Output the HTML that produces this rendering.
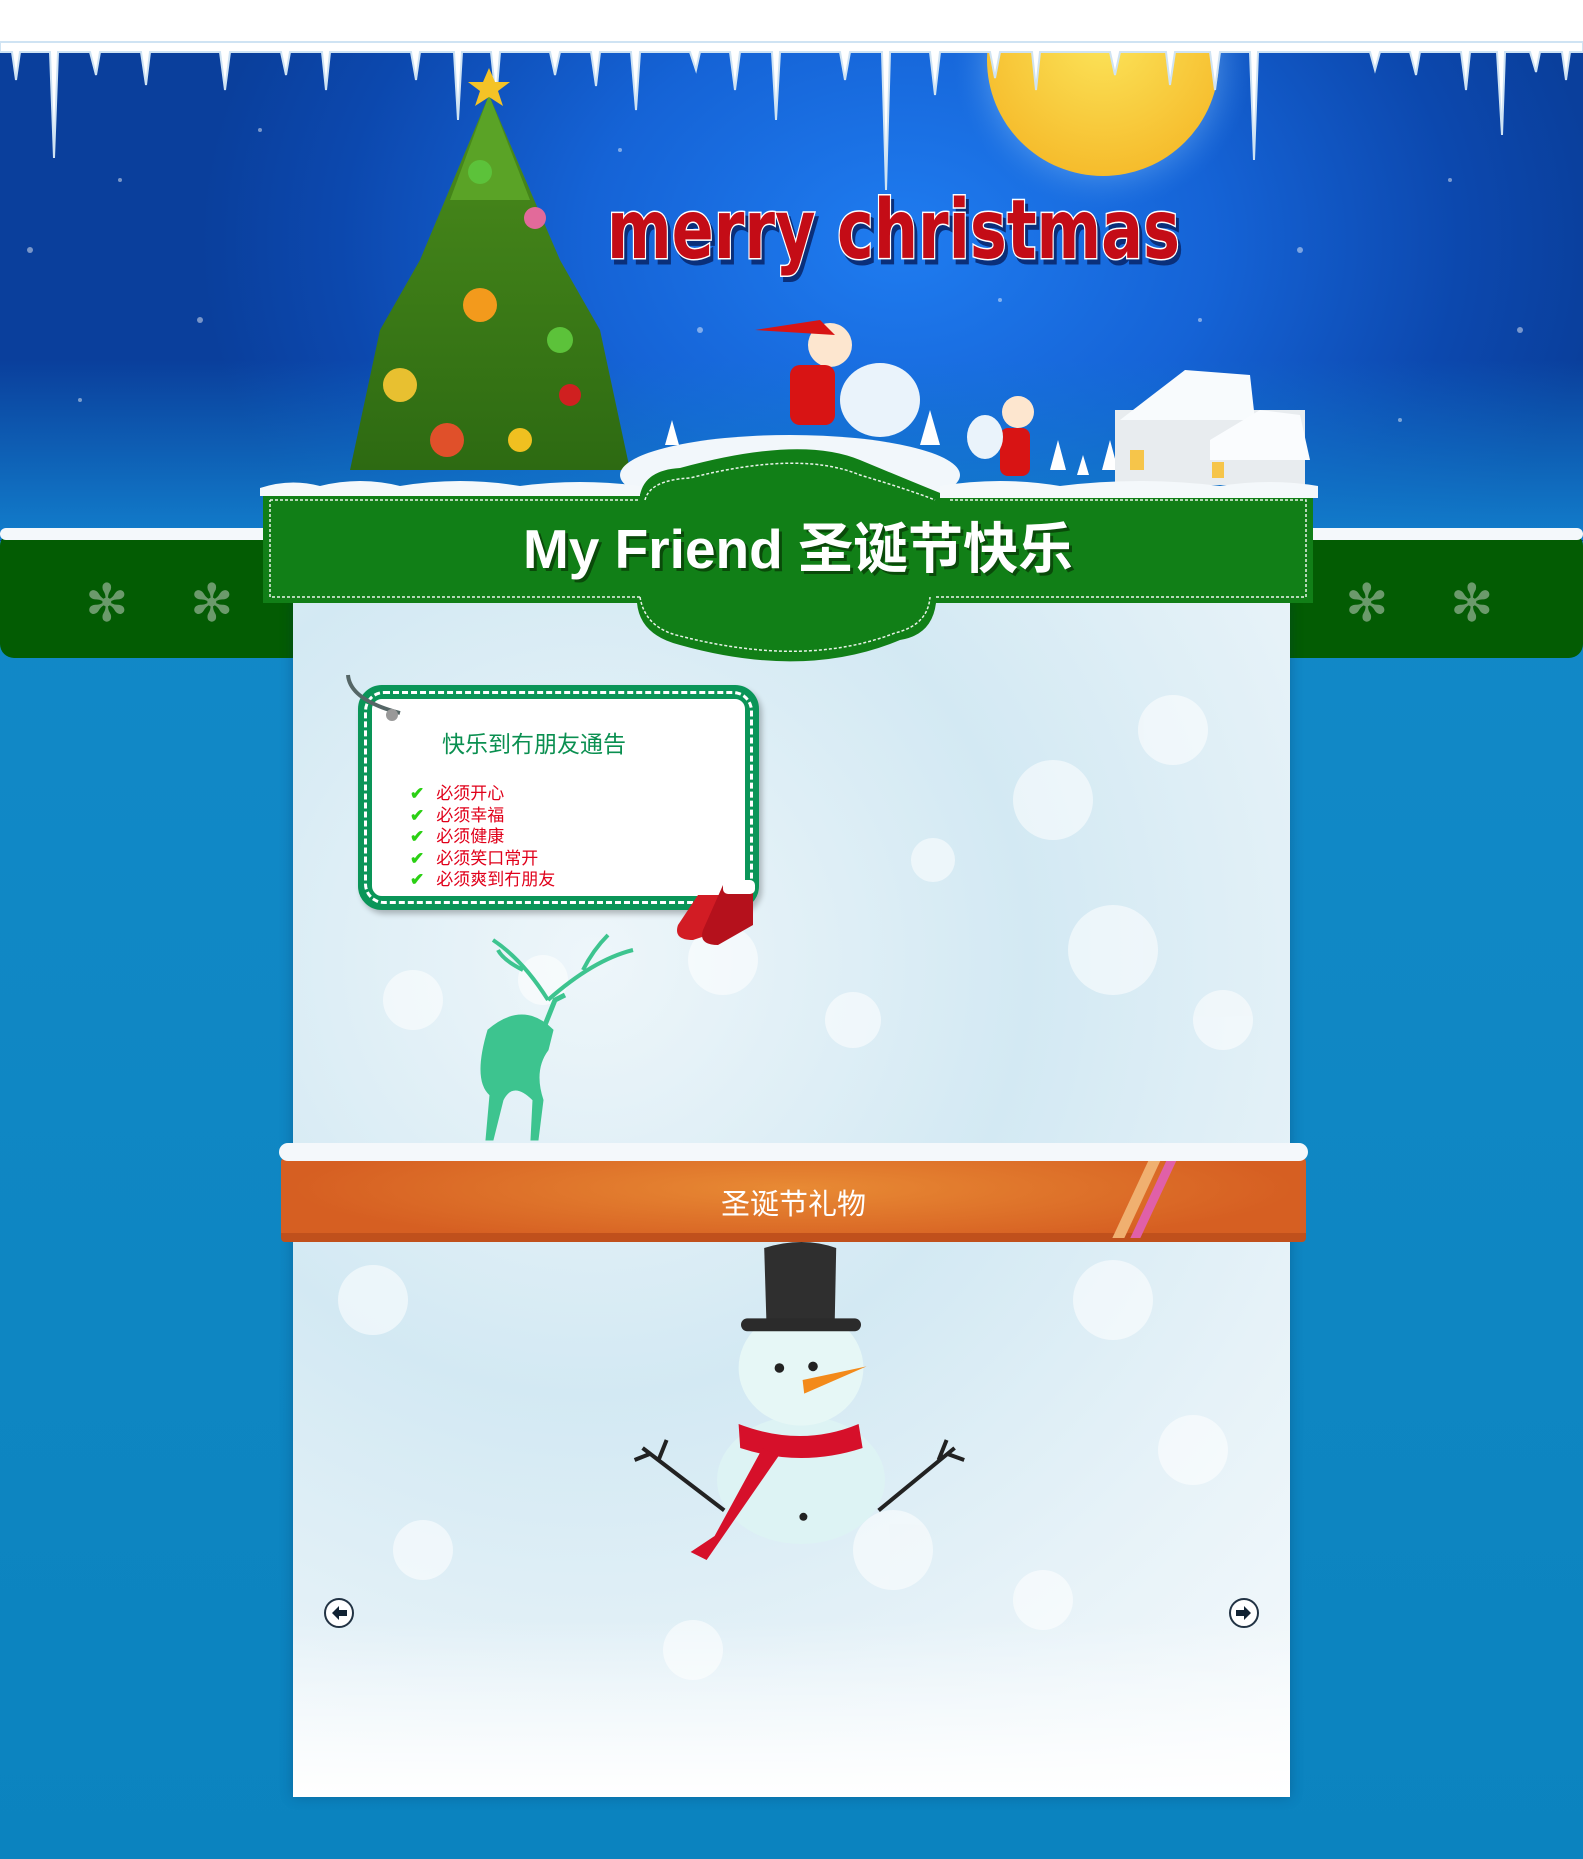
<!DOCTYPE html>
<html><head><meta charset="utf-8"><style>
html,body{margin:0;padding:0}
body{width:1583px;height:1859px;position:relative;overflow:hidden;background:#0f86c3;font-family:"Liberation Sans","Noto Sans CJK SC",sans-serif}
.abs{position:absolute}
</style></head><body>
<div class="abs" style="left:0;top:533px;width:1583px;height:1326px;background:linear-gradient(#1289c8,#0e86c2 60%,#0b83bf)"></div>
<div class="abs" style="left:0;top:41px;width:1583px;height:500px;background:radial-gradient(ellipse 700px 520px at 900px 200px,#1f7cf0 0%,#1563d6 45%,#0c48ae 80%,#0a3f9c 100%)"></div>
<div class="abs" style="left:0;top:360px;width:1583px;height:180px;background:linear-gradient(rgba(20,120,210,0),#127ecc)"></div>
<svg class="abs" style="left:0;top:0" width="1583" height="560">
 <defs>
  <radialGradient id="mg" cx="50%" cy="40%" r="60%"><stop offset="0" stop-color="#fbe45a"/><stop offset="1" stop-color="#f6bc2c"/></radialGradient>
  <radialGradient id="glow" cx="50%" cy="50%" r="50%"><stop offset="0.6" stop-color="#9fd3ff" stop-opacity=".6"/><stop offset="1" stop-color="#2b7fe8" stop-opacity="0"/></radialGradient>
  <linearGradient id="tg" x1="0" y1="0" x2="0" y2="1"><stop offset="0" stop-color="#4c8d1c"/><stop offset="1" stop-color="#2d6a12"/></linearGradient>
  <clipPath id="sky"><rect x="0" y="44" width="1583" height="520"/></clipPath>
 </defs>
 <rect x="0" y="0" width="1583" height="44" fill="#fff"/>
 <g clip-path="url(#sky)">
 <circle cx="1103" cy="60" r="150" fill="url(#glow)"/>
 <circle cx="1103" cy="60" r="116" fill="url(#mg)"/>
 </g>
 <path fill="#fff" stroke="#cfe3f3" stroke-width="2" d="M0 42 L1583 42 L1583 52 L1570 52 L1566 80 L1562 52 L1540 52 L1536 72 L1530 52 L1505 52 L1502 135 L1497 52 L1470 52 L1466 90 L1461 52 L1420 52 L1416 75 L1410 52 L1380 52 L1375 70 L1370 52 L1258 52 L1254 160 L1250 52 L1220 52 L1215 90 L1210 52 L1175 52 L1170 85 L1166 52 L1120 52 L1115 75 L1110 52 L1040 52 L1036 90 L1032 52 L1000 52 L995 78 L990 52 L940 52 L935 95 L930 52 L890 52 L886 190 L882 52 L850 52 L845 80 L840 52 L780 52 L776 120 L772 52 L740 52 L735 90 L730 52 L700 52 L696 70 L690 52 L640 52 L636 110 L631 52 L600 52 L596 86 L591 52 L560 52 L555 75 L550 52 L500 52 L496 100 L491 52 L462 52 L458 120 L454 52 L420 52 L416 80 L411 52 L330 52 L326 90 L322 52 L290 52 L286 75 L281 52 L230 52 L225 90 L220 52 L150 52 L146 85 L141 52 L100 52 L96 75 L90 52 L58 52 L54 158 L50 52 L20 52 L16 80 L12 52 L0 52 Z"/>
 <g fill="#fff" opacity=".45">
  <circle cx="30" cy="250" r="3"/><circle cx="120" cy="180" r="2"/><circle cx="200" cy="320" r="3"/><circle cx="80" cy="400" r="2"/><circle cx="260" cy="130" r="2"/><circle cx="700" cy="330" r="3"/><circle cx="620" cy="150" r="2"/><circle cx="1300" cy="250" r="3"/><circle cx="1450" cy="180" r="2"/><circle cx="1520" cy="330" r="3"/><circle cx="1400" cy="420" r="2"/><circle cx="1200" cy="320" r="2"/><circle cx="1000" cy="300" r="2"/><circle cx="560" cy="420" r="2"/>
 </g>
 <polygon points="489,95 560,260 600,330 630,470 350,470 380,330 420,260" fill="url(#tg)"/>
 <polygon points="489,95 530,200 450,200" fill="#5aa326"/>
 <g>
  <circle cx="480" cy="172" r="12" fill="#5cc23a"/><circle cx="535" cy="218" r="11" fill="#e26a9a"/><circle cx="480" cy="305" r="17" fill="#f39a1c"/><circle cx="400" cy="385" r="17" fill="#e8c030"/><circle cx="560" cy="340" r="13" fill="#5cc23a"/><circle cx="447" cy="440" r="17" fill="#e0502a"/><circle cx="520" cy="440" r="12" fill="#f0c020"/><circle cx="570" cy="395" r="11" fill="#d02020"/>
  <polygon points="489,68 495,82 510,82 498,91 503,106 489,97 475,106 480,91 468,82 483,82" fill="#f4c326"/>
 </g>
 <ellipse cx="790" cy="475" rx="170" ry="40" fill="#f2f7fb"/>
 <circle cx="830" cy="345" r="22" fill="#fde6cf"/>
 <polygon points="755,330 820,320 835,335" fill="#d81414"/>
 <rect x="790" y="365" width="45" height="60" rx="10" fill="#d81414"/>
 <ellipse cx="880" cy="400" rx="40" ry="37" fill="#eaf3fb"/>
 <circle cx="1018" cy="412" r="16" fill="#fde6cf"/>
 <rect x="1000" y="428" width="30" height="48" rx="8" fill="#d81414"/>
 <ellipse cx="985" cy="437" rx="18" ry="22" fill="#eaf3fb"/>
 <g fill="#fff"><polygon points="672,420 665,445 679,445"/><polygon points="930,410 920,445 940,445"/><polygon points="1058,440 1050,470 1066,470"/><polygon points="1083,455 1077,475 1089,475"/><polygon points="1110,440 1102,470 1118,470"/></g>
 <rect x="1115" y="410" width="190" height="75" fill="#e8ecef"/>
 <polygon points="1120,420 1185,370 1250,375 1255,420" fill="#f8fbfd"/>
 <polygon points="1210,440 1260,410 1300,415 1310,460 1210,460" fill="#fafcfe"/>
 <rect x="1130" y="450" width="14" height="20" fill="#f6c54a"/><rect x="1212" y="462" width="12" height="16" fill="#f6c54a"/>
 <text x="607" y="258" textLength="573" lengthAdjust="spacingAndGlyphs" font-family="DejaVu Sans" font-weight="bold" font-size="82" fill="#c40c16" stroke="#fff" stroke-width="3" paint-order="stroke" style="filter:drop-shadow(3px 5px 0 #0a2f7a)">merry christmas</text>
</svg>

<div class="abs" style="left:0;top:532px;width:300px;height:126px;background:#035c03;border-radius:14px 0 0 14px"></div>
<div class="abs" style="left:1283px;top:532px;width:300px;height:126px;background:#035c03;border-radius:0 14px 14px 0"></div>
<div class="abs" style="left:0;top:528px;width:300px;height:12px;background:#f4f8fb;border-radius:6px"></div>
<div class="abs" style="left:1283px;top:528px;width:300px;height:12px;background:#f4f8fb;border-radius:6px"></div>
<div class="abs" style="left:85px;top:578px;color:#6b9a6b;font-size:52px;line-height:52px">✻</div>
<div class="abs" style="left:190px;top:578px;color:#6b9a6b;font-size:52px;line-height:52px">✻</div>
<div class="abs" style="left:1345px;top:578px;color:#6b9a6b;font-size:52px;line-height:52px">✻</div>
<div class="abs" style="left:1450px;top:578px;color:#6b9a6b;font-size:52px;line-height:52px">✻</div>

<div class="abs" style="left:293px;top:600px;width:997px;height:1197px;background:radial-gradient(circle at 30% 30%,#eef6fa 0,#d3e9f3 40%,#e6f2f8 70%,#f6fafc 100%);box-shadow:0 0 12px rgba(0,40,80,.3)">
 <div class="abs" style="left:0;top:1020px;width:997px;height:177px;background:linear-gradient(rgba(255,255,255,0),#fff)"></div>
 <svg class="abs" style="left:0;top:0" width="997" height="1197">
  <g fill="#fff" opacity=".55">
   <circle cx="120" cy="400" r="30"/><circle cx="250" cy="380" r="25"/><circle cx="430" cy="360" r="35"/><circle cx="560" cy="420" r="28"/><circle cx="760" cy="200" r="40"/><circle cx="880" cy="130" r="35"/><circle cx="640" cy="260" r="22"/><circle cx="820" cy="350" r="45"/><circle cx="930" cy="420" r="30"/><circle cx="80" cy="700" r="35"/><circle cx="820" cy="700" r="40"/><circle cx="900" cy="850" r="35"/><circle cx="130" cy="950" r="30"/><circle cx="600" cy="950" r="40"/><circle cx="400" cy="1050" r="30"/><circle cx="750" cy="1000" r="30"/>
  </g>
  <g fill="#3dc48f" stroke="#3dc48f">
   <path d="M195 430 Q230 400 260 430 L255 450 Q240 470 250 500 L245 540 L238 540 L240 500 Q220 480 210 500 L200 540 L193 540 L197 495 Q180 480 195 430Z"/>
   <path d="M250 430 L262 400 L272 395" fill="none" stroke-width="5"/>
   <path d="M255 400 Q230 360 200 340 M230 370 Q210 360 205 350 M255 400 Q300 360 340 350 M290 370 Q300 350 315 335" fill="none" stroke-width="4"/>
  </g>
  <g transform="translate(508,648) scale(0.8) translate(-508,-540)">
  <ellipse cx="508" cy="830" rx="105" ry="80" fill="#ddf3f4"/>
  <ellipse cx="508" cy="690" rx="78" ry="72" fill="#e6f7f6"/>
  <path d="M465 640 L462 540 Q510 525 552 540 L550 640Z" fill="#2f2f2f"/>
  <rect x="433" y="628" width="150" height="16" rx="8" fill="#2b2b2b"/>
  <circle cx="481" cy="690" r="6" fill="#222"/><circle cx="523" cy="688" r="6" fill="#222"/>
  <path d="M510 705 L590 688 L512 722Z" fill="#f38a1a"/>
  <path d="M430 760 Q508 790 580 760 L585 790 Q508 815 432 790Z" fill="#d6102a"/>
  <path d="M460 790 L400 900 L370 920 L390 930 L480 800Z" fill="#d6102a"/>
  <path d="M412 868 L310 790 M330 805 L340 780 M320 797 L300 805 M605 868 L700 790 M680 805 L690 780 M690 797 L712 805" stroke="#222" stroke-width="5" fill="none"/>
  <circle cx="511" cy="876" r="5" fill="#222"/>
  </g>
  <circle cx="46" cy="1013" r="14" fill="#fff" stroke="#234" stroke-width="2"/>
  <path d="M39 1013 L46 1006 L46 1010 L54 1010 L54 1016 L46 1016 L46 1020Z" fill="#123"/>
  <circle cx="951" cy="1013" r="14" fill="#fff" stroke="#234" stroke-width="2"/>
  <path d="M958 1013 L951 1006 L951 1010 L943 1010 L943 1016 L951 1016 L951 1020Z" fill="#123"/>
 </svg>
</div>

<svg class="abs" style="left:260px;top:440px" width="1065" height="230">
 <path d="M3 55 L380 55 Q385 30 420 28 Q540 -5 600 20 Q660 45 685 55 L1053 55 L1053 163 L676 163 Q672 195 640 200 Q545 240 420 205 Q380 195 377 163 L3 163Z" fill="#117f17"/>
 <path d="M10 60 L380 60 M690 60 L1046 60 L1046 157 L675 157 M380 157 L10 157 L10 60" fill="none" stroke="#e8f3e8" stroke-width="1.5" stroke-dasharray="3 2"/>
 <path d="M385 60 Q390 40 430 38 Q540 10 600 35 Q650 50 675 60 M380 157 Q385 188 420 196 Q545 228 635 193 Q668 185 670 157" fill="none" stroke="#e8f3e8" stroke-width="1.5" stroke-dasharray="3 2"/>
 <path d="M0 48 Q30 38 60 46 Q100 36 140 46 Q200 36 260 46 Q320 38 380 46 L380 56 L0 56Z" fill="#f4f8fb"/>
 <path d="M680 46 Q740 36 800 46 Q880 36 960 46 Q1010 38 1058 46 L1058 58 L680 58Z" fill="#f4f8fb"/>
 <text x="538" y="128" text-anchor="middle" font-size="55" font-weight="bold" fill="#fff" style="filter:drop-shadow(3px 3px 0 #0a4a0a)" font-family="Liberation Sans,Noto Sans CJK SC,sans-serif">My Friend 圣诞节快乐</text>
</svg>

<div class="abs" style="left:358px;top:685px;width:373px;height:197px;border:14px solid #0a9558;border-radius:24px;background:#fff;box-shadow:3px 4px 6px rgba(0,0,0,.25)">
 <div class="abs" style="left:-8px;top:-8px;right:-8px;bottom:-8px;border:3px dashed #fff;border-radius:20px"></div>
 <div class="abs" style="left:70px;top:26px;font-size:23px;color:#0a8f50">快乐到冇朋友通告</div>
 <div class="abs" style="left:38px;top:84px;font-size:17px;line-height:21.5px;color:#e0001a">
  <div><span style="color:#2bd014;font-weight:bold;margin-right:12px">✔</span>必须开心</div>
  <div><span style="color:#2bd014;font-weight:bold;margin-right:12px">✔</span>必须幸福</div>
  <div><span style="color:#2bd014;font-weight:bold;margin-right:12px">✔</span>必须健康</div>
  <div><span style="color:#2bd014;font-weight:bold;margin-right:12px">✔</span>必须笑口常开</div>
  <div><span style="color:#2bd014;font-weight:bold;margin-right:12px">✔</span>必须爽到冇朋友</div>
 </div>
</div>
<svg class="abs" style="left:340px;top:655px" width="70" height="70"><path d="M60 58 Q10 45 8 20" fill="none" stroke="#566" stroke-width="4"/><circle cx="52" cy="60" r="6" fill="#999"/></svg>
<svg class="abs" style="left:668px;top:875px" width="100" height="80"><path d="M30 20 L55 20 L55 55 L25 65 Q5 65 10 50Z" fill="#d21c24"/><path d="M55 10 L85 10 L85 50 L50 70 Q30 70 35 55Z" fill="#b5111c"/><rect x="55" y="5" width="32" height="14" rx="5" fill="#fff"/></svg>

<div class="abs" style="left:281px;top:1158px;width:1025px;height:84px;background:radial-gradient(ellipse 500px 60px at 50% 40%,#e88a34,#d65f22);border-bottom:9px solid #c0501c;box-sizing:border-box;border-radius:4px">
 <div class="abs" style="left:0;top:23px;width:1025px;text-align:center;font-size:29px;color:#fff">圣诞节礼物</div>
 <div class="abs" style="left:850px;top:0;width:12px;height:80px;background:#f0b070;transform:skewX(-25deg)"></div>
 <div class="abs" style="left:868px;top:0;width:10px;height:80px;background:#e060a8;transform:skewX(-25deg)"></div>
</div>
<div class="abs" style="left:279px;top:1143px;width:1029px;height:18px;background:#f4f8fb;border-radius:9px"></div>
</body></html>
